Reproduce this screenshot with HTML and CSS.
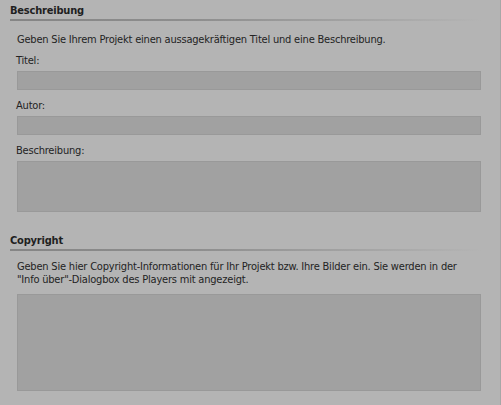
FILE: index.html
```html
<!DOCTYPE html>
<html lang="de">
<head>
<meta charset="utf-8">
<title>Projektinfo</title>
<link rel="stylesheet" href="styles.css">
</head>
<body>
<div class="panel">
  <section class="group">
    <h2 class="group-title">Beschreibung</h2>
    <div class="rule"></div>
    <div class="group-body">
      <p class="intro">Geben Sie Ihrem Projekt einen aussagekräftigen Titel und eine Beschreibung.</p>
      <label class="label">Titel:</label>
      <div class="field field-line"></div>
      <label class="label">Autor:</label>
      <div class="field field-line"></div>
      <label class="label">Beschreibung:</label>
      <div class="field field-desc"></div>
    </div>
  </section>
  <section class="group group-copy">
    <h2 class="group-title">Copyright</h2>
    <div class="rule"></div>
    <div class="group-body">
      <p class="intro intro-copy">Geben Sie hier Copyright-Informationen für Ihr Projekt bzw. Ihre Bilder ein. Sie werden in der "Info über"-Dialogbox des Players mit angezeigt.</p>
      <div class="field field-copy"></div>
    </div>
  </section>
</div>
</body>
</html>
```
FILE: styles.css
```css
html, body {
  margin: 0;
  padding: 0;
  background: #b4b4b4;
}
body {
  width: 501px;
  height: 405px;
  overflow: hidden;
  font-family: "DejaVu Sans", Verdana, sans-serif;
  font-stretch: condensed;
  font-size: 11px;
  letter-spacing: -0.2px;
  color: #232323;
}
.panel {
  box-sizing: border-box;
  width: 501px;
  height: 405px;
  border-right: 1px solid #a7a7a7;
  padding: 4px 0 0 10px;
}
.group-title {
  margin: 0;
  font-size: 11px;
  font-weight: bold;
  line-height: 14px;
  color: #1f1f1f;
  height: 15px;
}
.rule {
  width: 472px;
  height: 2px;
  background: linear-gradient(to right, #858585 0%, #8e8e8e 40%, rgba(180,180,180,0) 100%);
}
.group-body {
  padding-left: 7px;
}
.intro {
  margin: 12px 0 0;
  line-height: 13px;
}
.label {
  display: block;
  margin: 9px 0 4px -1px;
  line-height: 13px;
}
.intro + .label {
  margin-top: 8px;
}
.field {
  box-sizing: border-box;
  width: 464px;
  background: #a1a1a1;
  border: 1px solid #999999;
}
.field-line { height: 19px; }
.field-desc { height: 51px; }
.group-copy {
  margin-top: 22px;
}
.intro-copy {
  margin-top: 9px;
  max-width: 455px;
}
.field-copy {
  margin-top: 8px;
  height: 97px;
}
```
